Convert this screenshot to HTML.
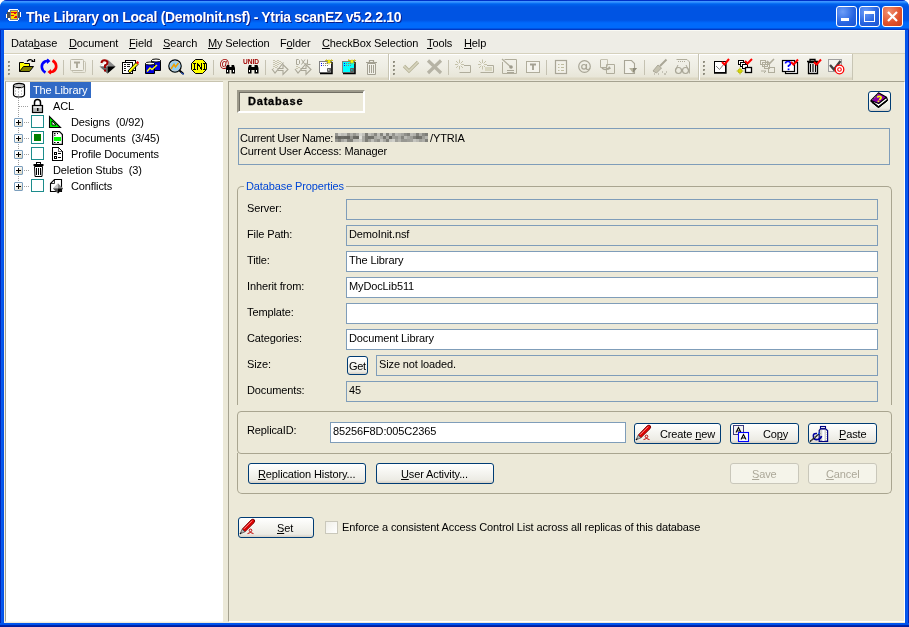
<!DOCTYPE html>
<html><head><meta charset="utf-8">
<style>
*{margin:0;padding:0;box-sizing:border-box}
html,body{width:909px;height:627px;overflow:hidden;background:#fff}
body{-webkit-font-smoothing:none;font-smooth:never}
body{position:relative;font-family:"Liberation Sans",sans-serif;font-size:11px;color:#000}
.a{position:absolute}
.t{position:absolute;white-space:nowrap;line-height:13px;font-size:11px;letter-spacing:-0.12px;will-change:transform}
.u{text-decoration:underline;text-underline-offset:1px}
svg{position:absolute;overflow:visible}
.inp{position:absolute;border:1px solid #7F9DB9;background:#fff;height:21px}
.ro{background:#ECE9D8}
.btn{position:absolute;border:1px solid #003C74;border-radius:3px;background:linear-gradient(#FFFFFF,#F6F6F2 40%,#ECEBE4 85%,#D6D0C5);}
.btnd{position:absolute;border:1px solid #C9C7BA;border-radius:3px;background:#F5F4EA;color:#ACA899}
.grp{position:absolute;border:1px solid #A9A590;border-radius:4px}
</style></head><body>
<!-- frame -->
<div class="a" style="left:0;top:0;width:909px;height:627px;background:#0046D8;border-radius:7px 7px 0 0"></div>
<div class="a" style="left:0;top:30px;width:4px;height:597px;background:linear-gradient(90deg,#0028B8 0,#0028B8 1px,#0A5CF0 1px,#0050E8)"></div>
<div class="a" style="left:905px;top:30px;width:4px;height:597px;background:linear-gradient(90deg,#0050E8,#0A5CF0 3px,#0028B8 3px)"></div>
<div class="a" style="left:0;top:623px;width:909px;height:4px;background:linear-gradient(#0058F0 0,#0050E8 50%,#0028B0 50%,#001C98)"></div>
<!-- title bar -->
<div class="a" style="left:0;top:0;width:909px;height:30px;border-radius:7px 7px 0 0;background:linear-gradient(#0031C8 0,#0031C8 1px,#3D95FF 1px,#3D95FF 2px,#157BF9 3px,#0064EE 4px,#0054E3 7px,#0054E3 20px,#0062F5 22px,#006AFB 23px,#006AFB 28px,#0040CC 29px,#0035C0 30px)"></div>
<!-- app icon -->
<svg style="left:0;top:0" width="30" height="30" viewBox="0 0 30 30" shape-rendering="crispEdges">
<path d="M9 9H18V10H19V12H21V17H19V20H18V21H9V20H8V18H6V14H7V12H8V10H9Z" fill="#fff"/>
<rect x="7" y="12" width="13" height="6" fill="#505050"/>
<rect x="10" y="10" width="8" height="10" fill="#808080"/>
<rect x="11" y="11" width="6" height="8" fill="#FFD800"/>
<path d="M11 12h3v1h-1v1h-1v1h2v1h-3v-1h1v-1h1v-1h-2z" fill="#E01010"/>
<path d="M14 12h3v1h-1v2h-1v1h2v2h-3v-1h1v-2h1v-1h-2z" fill="#E01010"/>
</svg>
<div class="t" style="left:26px;top:9px;font-weight:bold;font-size:14px;line-height:16px;letter-spacing:-0.33px;color:#fff;text-shadow:1px 1px 0 #0A1E8C">The Library on Local (DemoInit.nsf) - Ytria scanEZ v5.2.2.10</div>
<!-- window buttons -->
<div class="a" style="left:836px;top:6px;width:21px;height:21px;border:1px solid #fff;border-radius:3px;background:radial-gradient(circle at 30% 25%,#6C9DF8,#2663E0 60%,#1D55D0)"></div>
<div class="a" style="left:841px;top:18px;width:8px;height:3px;background:#fff"></div>
<div class="a" style="left:859px;top:6px;width:21px;height:21px;border:1px solid #fff;border-radius:3px;background:radial-gradient(circle at 30% 25%,#6C9DF8,#2663E0 60%,#1D55D0)"></div>
<div class="a" style="left:864px;top:11px;width:11px;height:11px;border:1px solid #fff;border-top-width:3px"></div>
<div class="a" style="left:882px;top:6px;width:21px;height:21px;border:1px solid #fff;border-radius:3px;background:radial-gradient(circle at 30% 25%,#F09070,#E0502A 60%,#C8401E)"></div>
<svg style="left:882px;top:6px" width="21" height="21" viewBox="0 0 21 21"><path d="M6 6L15 15M15 6L6 15" stroke="#fff" stroke-width="2.2"/></svg>

<!-- client -->
<div class="a" style="left:4px;top:30px;width:901px;height:593px;background:#ECE9D8"></div>
<!-- menu bar -->
<div class="a" style="left:4px;top:30px;width:901px;height:23px;background:#EEEDE6;border-top:1px solid #FAFAF4"></div>
<div class="a" style="left:4px;top:53px;width:901px;height:1px;background:#D5D1BD"></div>
<div class="t" style="left:11px;top:37px">Data<span class="u">b</span>ase</div>
<div class="t" style="left:69px;top:37px"><span class="u">D</span>ocument</div>
<div class="t" style="left:129px;top:37px"><span class="u">F</span>ield</div>
<div class="t" style="left:163px;top:37px"><span class="u">S</span>earch</div>
<div class="t" style="left:208px;top:37px"><span class="u">M</span>y Selection</div>
<div class="t" style="left:280px;top:37px">F<span class="u">o</span>lder</div>
<div class="t" style="left:322px;top:37px"><span class="u">C</span>heckBox Selection</div>
<div class="t" style="left:427px;top:37px"><span class="u">T</span>ools</div>
<div class="t" style="left:464px;top:37px"><span class="u">H</span>elp</div>

<!-- toolbar -->
<div class="a" style="left:4px;top:54px;width:901px;height:27px;background:#ECE9D8"></div><div class="a" style="left:4px;top:54px;width:384px;height:27px;background:linear-gradient(#FFFFFF 0,#FFFFFF 1px,#F4F3EC 1px,#EFEEE5 12px,#E8E6D8 23px,#DCD7C3 24px,#DCD7C3 26px,#EAE7D8 26px)"></div><div class="a" style="left:389px;top:54px;width:309px;height:27px;background:linear-gradient(#FFFFFF 0,#FFFFFF 1px,#F4F3EC 1px,#EFEEE5 12px,#E8E6D8 23px,#DCD7C3 24px,#DCD7C3 26px,#EAE7D8 26px)"></div><div class="a" style="left:699px;top:54px;width:153px;height:27px;background:linear-gradient(#FFFFFF 0,#FFFFFF 1px,#F4F3EC 1px,#EFEEE5 12px,#E8E6D8 23px,#DCD7C3 24px,#DCD7C3 26px,#EAE7D8 26px)"></div>
<svg style="left:0;top:0" width="909" height="81" viewBox="0 0 909 81" shape-rendering="crispEdges">
<!-- band backgrounds -->
<rect x="388" y="54" width="1" height="26" fill="#C8C5B4"/><rect x="389" y="54" width="1" height="26" fill="#FFFFFF"/>
<rect x="698" y="54" width="1" height="26" fill="#C8C5B4"/><rect x="699" y="54" width="1" height="26" fill="#FFFFFF"/>
<rect x="852" y="54" width="1" height="26" fill="#C8C5B4"/>
<!-- grips -->
<rect x="9" y="62" width="1" height="1" fill="#FFFFFF"/><rect x="8" y="61" width="2" height="2" fill="#8E8C7E"/><rect x="9" y="62" width="1" height="1" fill="#B0AE9E"/><rect x="9" y="66" width="1" height="1" fill="#FFFFFF"/><rect x="8" y="65" width="2" height="2" fill="#8E8C7E"/><rect x="9" y="66" width="1" height="1" fill="#B0AE9E"/><rect x="9" y="70" width="1" height="1" fill="#FFFFFF"/><rect x="8" y="69" width="2" height="2" fill="#8E8C7E"/><rect x="9" y="70" width="1" height="1" fill="#B0AE9E"/><rect x="9" y="74" width="1" height="1" fill="#FFFFFF"/><rect x="8" y="73" width="2" height="2" fill="#8E8C7E"/><rect x="9" y="74" width="1" height="1" fill="#B0AE9E"/><rect x="394" y="62" width="1" height="1" fill="#FFFFFF"/><rect x="393" y="61" width="2" height="2" fill="#8E8C7E"/><rect x="394" y="62" width="1" height="1" fill="#B0AE9E"/><rect x="394" y="66" width="1" height="1" fill="#FFFFFF"/><rect x="393" y="65" width="2" height="2" fill="#8E8C7E"/><rect x="394" y="66" width="1" height="1" fill="#B0AE9E"/><rect x="394" y="70" width="1" height="1" fill="#FFFFFF"/><rect x="393" y="69" width="2" height="2" fill="#8E8C7E"/><rect x="394" y="70" width="1" height="1" fill="#B0AE9E"/><rect x="394" y="74" width="1" height="1" fill="#FFFFFF"/><rect x="393" y="73" width="2" height="2" fill="#8E8C7E"/><rect x="394" y="74" width="1" height="1" fill="#B0AE9E"/><rect x="704" y="62" width="1" height="1" fill="#FFFFFF"/><rect x="703" y="61" width="2" height="2" fill="#8E8C7E"/><rect x="704" y="62" width="1" height="1" fill="#B0AE9E"/><rect x="704" y="66" width="1" height="1" fill="#FFFFFF"/><rect x="703" y="65" width="2" height="2" fill="#8E8C7E"/><rect x="704" y="66" width="1" height="1" fill="#B0AE9E"/><rect x="704" y="70" width="1" height="1" fill="#FFFFFF"/><rect x="703" y="69" width="2" height="2" fill="#8E8C7E"/><rect x="704" y="70" width="1" height="1" fill="#B0AE9E"/><rect x="704" y="74" width="1" height="1" fill="#FFFFFF"/><rect x="703" y="73" width="2" height="2" fill="#8E8C7E"/><rect x="704" y="74" width="1" height="1" fill="#B0AE9E"/>
<!-- separators -->
<g fill="#C5C2B2">
<rect x="63" y="60" width="1" height="15"/><rect x="92" y="60" width="1" height="15"/><rect x="213" y="60" width="1" height="15"/><rect x="265" y="60" width="1" height="15"/>
<rect x="448" y="60" width="1" height="15"/><rect x="546" y="60" width="1" height="15"/><rect x="644" y="60" width="1" height="15"/>
</g>
<g shape-rendering="geometricPrecision">
<!-- open folder -->
<path d="M19.5 71.5V62.5H23.5L24.5 63.5H29.5V66.5" fill="#FFFF00" stroke="#000"/>
<path d="M19.5 71.5L23.5 66.5H33.5L29.5 71.5Z" fill="#808000" stroke="#000"/>
<path d="M27 61.5Q30 58 33 61" fill="none" stroke="#000" stroke-width="1.2"/>
<path d="M31.5 61.5H34.5V59" fill="none" stroke="#000" stroke-width="1.2"/>
<!-- refresh -->
<path d="M49 60.5L45 61.5Q41.5 63.5 41.8 67Q42 70.5 45.5 72.5" fill="none" stroke="#0000FF" stroke-width="2.6"/>
<path d="M47 58.5L50.5 61L47 64Z" fill="#0000FF"/>
<path d="M49 72.5L53 71.5Q56.5 69.5 56.2 66Q56 62.5 52.5 60.5" fill="none" stroke="#FF0000" stroke-width="2.6"/>
<path d="M51 74.5L47.5 72L51 69Z" fill="#FF0000"/>
<!-- T disabled -->
<rect x="72.5" y="61.5" width="13" height="11" rx="1" fill="none" stroke="#C8C5B5"/>
<rect x="70.5" y="59.5" width="13" height="11" rx="1" fill="#F2F1EA" stroke="#BDBAAA"/>
<path d="M74 62.5H80M77 62.5V68" stroke="#A9A697" stroke-width="1.8"/>
<!-- ? diamond -->
<path d="M107.5 59.5L115.5 66.5L107.5 73.5L99.5 66.5Z" fill="#8A8A8A"/>
<path d="M107.5 59.5L107.5 66.5L99.5 66.5Z" fill="#FFFFFF"/>
<path d="M115.5 66.5L107.5 73.5L107.5 66.5Z" fill="#000"/>
<path d="M100 66.5L107.5 73.5L107.5 66.5" fill="#6A6A6A"/>
<path d="M101.5 63Q101.5 60.2 104.5 60.2Q107.5 60.2 107.5 62.8Q107.5 64.5 105 65.5V68" fill="none" stroke="#A00000" stroke-width="2"/>
<rect x="104" y="69.5" width="2" height="2" fill="#A00000"/>
<!-- edit -->
<rect x="125.5" y="60.5" width="10" height="10" fill="#fff" stroke="#000"/>
<rect x="122.5" y="62.5" width="10" height="11" fill="#fff" stroke="#000"/>
<path d="M124 64.5h2M127 64.5h3M124 66.5h2M127 66.5h3M124 68.5h2M124 70.5h2" stroke="#000" stroke-width=".9"/>
<path d="M128 71L136 62.5L138 64.5L129.8 73Z" fill="#FFFF00" stroke="#000" stroke-width=".9"/>
<path d="M136 62.5L137.5 61L139 62.5L138 64.5Z" fill="#FF0000"/>
<!-- db -->
<path d="M151.5 60.5V70.5H160.5V60.5" fill="#0000E0" stroke="#000"/>
<ellipse cx="156" cy="60.5" rx="4.5" ry="1.5" fill="#fff" stroke="#000"/>
<path d="M145.5 63.5V73.5H154.5V63.5" fill="#0000E0" stroke="#000"/>
<ellipse cx="150" cy="63.5" rx="4.5" ry="1.5" fill="#fff" stroke="#000"/>
<path d="M147 71.5L150 68L152 69.5L157 65" fill="none" stroke="#FFFF00" stroke-width="1.5"/>
<!-- magnifier -->
<circle cx="175" cy="66" r="6.2" fill="#8AD0F8" stroke="#000" stroke-width="1.2"/>
<circle cx="175" cy="66" r="4.8" fill="none" stroke="#C8C8C8" stroke-width="1"/>
<path d="M171 69L174 64.5L175.5 67L178.5 63" fill="none" stroke="#F0A000" stroke-width="1.5"/>
<path d="M179.5 70.5L183.5 74" stroke="#000" stroke-width="2"/>
<path d="M181 72.5L184 74.5" stroke="#2050D0" stroke-width="1"/>
<!-- INI -->
<path d="M195.5 59.5H202.5L206.5 63.5V69.5L202.5 73.5H195.5L191.5 69.5V63.5Z" fill="#FFFF00" stroke="#000"/>
<g fill="#000" shape-rendering="crispEdges"><rect x="193" y="63" width="3" height="1"/><rect x="194" y="63" width="1" height="7"/><rect x="193" y="69" width="3" height="1"/><rect x="197" y="63" width="1" height="7"/><rect x="201" y="63" width="1" height="7"/><rect x="198" y="64" width="1" height="2"/><rect x="199" y="65" width="1" height="2"/><rect x="200" y="67" width="1" height="2"/><rect x="203" y="63" width="3" height="1"/><rect x="204" y="63" width="1" height="7"/><rect x="203" y="69" width="3" height="1"/></g>
<!-- @ binoc -->
<text x="224.5" y="67" font-family="Liberation Sans" font-weight="bold" font-size="10" text-anchor="middle" fill="#A00000">@</text>
<path d="M226 73.5V68L227 65H229.5V67H231.5V65H234L235 68V73.5H231.5V70H229.5V73.5Z" fill="#000"/>
<rect x="227" y="70" width="1" height="2" fill="#fff"/><rect x="233" y="70" width="1" height="2" fill="#fff"/>
<!-- UNID binoc -->
<text x="251" y="64" font-family="Liberation Sans" font-weight="bold" font-size="6.6" text-anchor="middle" fill="#A00000" letter-spacing="0">UNID</text>
<path d="M248 73.5V68L249 65H251.5V67H254.5V65H257.5L258.5 68V73.5H254.5V70H251.5V73.5Z" fill="#000"/>
<rect x="249" y="70" width="1" height="2" fill="#fff"/><rect x="256" y="70" width="1" height="2" fill="#fff"/>
<!-- disabled sign/arrow 1 -->
<g shape-rendering="crispEdges">
<path d="M273 60h2v1h-2zM277 60h2v1h-2zM275 61h2v1h-2zM279 61h2v1h-2zM273 62h2v1h-2zM277 62h2v1h-2zM281 62h1v1h-1zM275 63h2v1h-2zM279 63h2v1h-2zM273 64h2v1h-2zM277 64h2v1h-2zM275 65h2v1h-2zM273 66h2v1h-2zM277 66h1v1h-1zM275 67h2v1h-2zM273 68h1v1h-1z" fill="#C9C6B0"/>
</g>
<g fill="none" stroke="#A9A697" stroke-width="1.1">
<path d="M272 69L275 73L283.5 62.5"/>
<path d="M277.5 68.5H283V64.5L288 69.5L283 74.5V70.5H277.5"/>
</g>
<g fill="none" stroke="#A9A697" stroke-width="1">
<path d="M296.5 59.5V64.5H298.5L299.5 63.5V60.5L298.5 59.5Z"/>
<path d="M301.5 59.5L305 64.5M305 59.5L301.5 64.5"/>
<path d="M307.5 59.5V64.5H310.5"/>
</g>
<g shape-rendering="crispEdges"><path d="M296 66h2v1h-2zM298 67h2v1h-2zM296 68h2v1h-2z" fill="#C9C6B0"/></g>
<g fill="none" stroke="#A9A697" stroke-width="1.1">
<path d="M295 69L298 73L306.5 63"/>
<path d="M300.5 68.5H306V64.5L311 69.5L306 74.5V70.5H300.5"/>
</g>
<!-- white doc star -->
<rect x="319.5" y="61.5" width="12" height="11" fill="#fff" stroke="#808080"/>
<path d="M332 62V73.5H320" fill="none" stroke="#000" stroke-width="1.5"/>
<path d="M321 63.5h1M321 65.5h1" stroke="#0000FF"/>
<path d="M323 63.5h5M323 65.5h5" stroke="#808080" stroke-dasharray="1 1"/>
<path d="M327.5 68.5h3v3h-3z" fill="#C0C0C0" stroke="#606060"/>
<path d="M328 72L331 68" stroke="#606060"/>
<path d="M325 60.5h8M329 59.5v5M327 62.5L331 62.5M326 59.5L332 63.5M332 59.5L326 63.5" stroke="#C0B000" stroke-width=".8"/>
<circle cx="329" cy="61.5" r="1.2" fill="#FFFF00"/>
<!-- cyan doc star -->
<rect x="342.5" y="61.5" width="12" height="11" fill="#00FFFF" stroke="#808080"/>
<path d="M355 62V73.5H343" fill="none" stroke="#000" stroke-width="1.5"/>
<path d="M344 63.5h1M344 65.5h1" stroke="#0000FF"/>
<path d="M346 63.5h5M346 65.5h5" stroke="#808080" stroke-dasharray="1 1"/>
<path d="M350.5 68.5h3v3h-3z" fill="#00C0C0" stroke="#606060"/>
<path d="M351 72L354 68" stroke="#606060"/>
<path d="M348 60.5h8M352 59.5v5M348 59.5L355 63.5M355 59.5L349 63.5" stroke="#C0B000" stroke-width=".8"/>
<circle cx="352" cy="61.5" r="1.2" fill="#FFFF00"/>
<!-- trash disabled -->
<path d="M366 62.5H377M369.5 62V60.5H373.5V62" fill="none" stroke="#A3A092" stroke-width="1.2"/>
<path d="M367.5 63.5H375.5V74.5H367.5Z" fill="#F1F0E8" stroke="#A3A092"/>
<path d="M369.5 65V73M371.5 65V73M373.5 65V73" stroke="#A3A092"/>
<!-- check disabled -->
<path d="M404 66L409 71L418 62" fill="none" stroke="#B5B296" stroke-width="3.2"/>
<path d="M404 66L409 71L418 62" fill="none" stroke="#D8D5BE" stroke-width="1.6"/>
<!-- X disabled -->
<path d="M428 60.5L441 73M441 60.5L428 73" stroke="#B6B3A5" stroke-width="3.2"/>
<!-- star folders disabled -->
<g stroke="#C5C2AA" stroke-width="1" fill="none">
<path d="M455 64.5h9M459.5 59.5v10M456 61L463 68M463 61L456 68"/>
<path d="M459.5 72.5H470.5V65.5H464" stroke="#B0AD9C"/>
<path d="M478 64.5h9M482.5 59.5v10M479 61L486 68M486 61L479 68"/>
<path d="M480.5 72.5H493.5V65.5H487" stroke="#B0AD9C"/>
</g>
<circle cx="459.5" cy="64.5" r="1.6" fill="#F4F3EC"/>
<circle cx="482.5" cy="64.5" r="1.6" fill="#F4F3EC"/>
<rect x="485" y="67" width="7" height="4" fill="#D8D6C0"/>
<!-- icon 3 disabled -->
<path d="M504.5 59.5H516.5V73.5H502.5V62" fill="none" stroke="#B0AD9C"/>
<path d="M502 59L512 68" stroke="#B0AD9C" stroke-width="1.2"/>
<circle cx="511" cy="67" r="1.8" fill="#9E9B8C"/>
<path d="M507 70.5h7M507 72.5h7" stroke="#A9A697"/>
<!-- T disabled 2 -->
<rect x="526.5" y="61.5" width="13" height="11" fill="#F4F3EC" stroke="#B0AD9C"/>
<path d="M530 64.5H536M533 64.5V70" stroke="#A3A092" stroke-width="1.8"/>
<!-- list disabled -->
<rect x="555.5" y="60.5" width="11" height="13" fill="#F2F1E9" stroke="#A9A697" stroke-width="1.2"/>
<path d="M558 64.5h1.5M561 64.5h3M558 67.5h1.5M561 67.5h3M558 70.5h1.5M561 70.5h3" stroke="#C0BDA0"/>
<!-- @ disabled -->
<circle cx="584.5" cy="66.5" r="5.8" fill="none" stroke="#A9A697" stroke-width="1.2"/>
<circle cx="584" cy="66.8" r="2.3" fill="none" stroke="#A9A697" stroke-width="1.2"/>
<path d="M586.5 64V69Q588 70.5 590 68" fill="none" stroke="#A9A697" stroke-width="1.1"/>
<!-- icon disabled docs arrow -->
<path d="M600.5 59.5H607.5V66.5" fill="none" stroke="#C5C2B2"/>
<path d="M600.5 60V67.5H607" fill="none" stroke="#B0AD9C"/>
<path d="M606.5 64.5H614.5V73.5H606.5Z" fill="none" stroke="#B0AD9C"/>
<path d="M602 68Q605 71 609 68" fill="none" stroke="#A9A697" stroke-width="1.6"/>
<path d="M609 66L611 68.5L608 70Z" fill="#A9A697"/>
<!-- doc arrow disabled -->
<path d="M624.5 60.5H631.5L634.5 63.5V73.5H624.5Z" fill="#F4F3EC" stroke="#A9A697" stroke-width="1.1"/>
<path d="M629 68H637L633 73Z" fill="#B8B59F"/>
<path d="M633 68H637L633 73Z" fill="#8E8B7C"/>
<!-- brush disabled -->
<path d="M660 66L666.5 59.5" stroke="#A9A697" stroke-width="2"/>
<path d="M653 71L658 65L661.5 68L656.5 73Z" fill="#C5C2B0" stroke="#A9A697"/>
<path d="M654 74h1M658 74h1M662 72h1M664 74h2M666 72h1" stroke="#9E9B8C"/>
<!-- glasses disabled -->
<path d="M676.5 59.5H687L689.5 62V73.5" fill="none" stroke="#B0AD9C"/>
<path d="M678 61.5h1M680 61.5h1M682 61.5h1M684 61.5h1" stroke="#B0AD9C"/>
<circle cx="678.5" cy="70.5" r="3" fill="none" stroke="#A9A697" stroke-width="1.2"/>
<circle cx="685.5" cy="70.5" r="3" fill="none" stroke="#A9A697" stroke-width="1.2"/>
<path d="M675.5 70L678 65M688.5 70L686 65" stroke="#A9A697"/>
<!-- checkbox check -->
<rect x="714.5" y="61.5" width="11" height="11" fill="#fff" stroke="#000"/>
<path d="M726 62V73H714" fill="none" stroke="#000" stroke-width="1.3"/>
<path d="M716 66L719.5 69.5L724 64" fill="none" stroke="#808080" stroke-width="1"/>
<path d="M722 62L724.5 64.5L729 59" fill="none" stroke="#FF0000" stroke-width="2"/>
<!-- stack check -->
<rect x="738.5" y="60.5" width="5" height="4" fill="#fff" stroke="#000"/>
<rect x="740.5" y="62.5" width="5" height="4" fill="#fff" stroke="#000"/>
<rect x="742.5" y="64.5" width="5" height="4" fill="#fff" stroke="#000"/>
<rect x="745.5" y="67.5" width="6" height="5" fill="#fff" stroke="#000" stroke-width="1.3"/>
<path d="M745 61L747.5 63.5L752 59" fill="none" stroke="#FF0000" stroke-width="2"/>
<circle cx="740" cy="71" r="2" fill="#FFFF00" stroke="#A0A000" stroke-width=".8"/>
<path d="M736.5 71h7M740 67.5v7" stroke="#C0C000" stroke-width=".8"/>
<!-- stack disabled -->
<g fill="none" stroke="#B0AD9C">
<rect x="760.5" y="60.5" width="5" height="4"/><rect x="762.5" y="62.5" width="5" height="4"/><rect x="764.5" y="64.5" width="5" height="4"/><rect x="768.5" y="67.5" width="6" height="5"/>
<path d="M767 61L769.5 63.5L774 59" stroke-width="1.6"/>
<path d="M761 71H766L764 73" />
</g>
<!-- ? check -->
<rect x="785.5" y="62.5" width="12" height="11" fill="#fff" stroke="#000" stroke-width="1.2"/>
<rect x="782.5" y="60.5" width="12" height="11" fill="#fff" stroke="#000" stroke-width="1.2"/>
<path d="M785.5 63.5Q785.5 61.5 788 61.5Q790.5 61.5 790.5 63.5Q790.5 65 788.5 65.8V67" fill="none" stroke="#0000FF" stroke-width="1.6"/>
<rect x="787.7" y="68.5" width="1.7" height="1.7" fill="#0000FF"/>
<path d="M791 62L793.5 64.5L798 59.5" fill="none" stroke="#FF0000" stroke-width="2"/>
<!-- trash check -->
<path d="M807 61.5H818M810 61V59.5H815V61" fill="none" stroke="#000" stroke-width="1.3"/>
<path d="M808.5 62.5H817.5V73.5H808.5Z" fill="#fff" stroke="#000" stroke-width="1.3"/>
<path d="M810.5 64V72M813 64V72M815.5 64V72" stroke="#000" stroke-width="1.2"/>
<path d="M814 62L816.5 64.5L821 59.5" fill="none" stroke="#FF0000" stroke-width="2"/>
<!-- target check -->
<rect x="828.5" y="59.5" width="13" height="12" fill="#F4F3EE" stroke="#A0A0A0"/>
<path d="M830 65L834 69.5L840.5 61" fill="none" stroke="#404040" stroke-width="2.4"/>
<circle cx="839.5" cy="69.5" r="4.3" fill="#fff" stroke="#FF0000" stroke-width="1.3"/>
<circle cx="839.5" cy="69.5" r="1.8" fill="#fff" stroke="#FF0000" stroke-width="1.1"/>
</g>
</svg>


<!-- tree pane -->
<div class="a" style="left:5px;top:81px;width:218px;height:541px;background:#fff;border-left:1px solid #A5A290;border-top:1px solid #C8C4B0;border-bottom:1px solid #FAF9F2"></div><div class="a" style="left:4px;top:81px;width:1px;height:541px;background:#F4F2E6"></div>

<!-- tree -->
<div class="a" style="left:30px;top:82px;width:61px;height:16px;background:#316AC5"></div>
<div class="t" style="left:33px;top:84px;color:#fff">The Library</div>
<svg style="left:12px;top:82px" width="14" height="16" viewBox="0 0 14 16">
<path d="M1.5 3.5v9c0 1.4 2.5 2.5 5.5 2.5s5.5-1.1 5.5-2.5v-9" fill="#fff" stroke="#000" stroke-width="1.2"/>
<ellipse cx="7" cy="3.5" rx="5.5" ry="2.2" fill="#C8C8C8" stroke="#000" stroke-width="1.2"/>
<path d="M3 6h1M6 7h1M9 6h1M3 9h1M6 10h1M9 9h1M3 12h1M6 13h1M9 12h1" stroke="#999" stroke-width="1"/>
</svg>
<!-- dotted lines -->
<div class="a" style="left:18px;top:98px;width:1px;height:88px;background:repeating-linear-gradient(#A0A0A0 0 1px,transparent 1px 2px)"></div>
<div class="a" style="left:19px;top:106px;width:10px;height:1px;background:repeating-linear-gradient(90deg,#A0A0A0 0 1px,transparent 1px 2px)"></div>
<!-- ACL -->
<svg style="left:31px;top:98px" width="13" height="16" viewBox="0 0 13 16">
<path d="M3.5 7V4.5a3 3 0 0 1 6 0V7" fill="none" stroke="#000" stroke-width="1.5"/>
<rect x="1.5" y="7.5" width="10" height="7" fill="#B8B8B8" stroke="#000" stroke-width="1.2"/>
<rect x="2.5" y="8.5" width="8" height="1.2" fill="#fff"/>
<rect x="6" y="10" width="1.5" height="3" fill="#000"/>
</svg>
<div class="t" style="left:53px;top:100px">ACL</div>
<div class="a" style="left:14px;top:118px;width:9px;height:9px;border:1px solid #7B9EBD;border-radius:1px;background:linear-gradient(135deg,#fff 30%,#D8D2BC)"></div><div class="a" style="left:16px;top:122px;width:5px;height:1px;background:#000"></div><div class="a" style="left:18px;top:120px;width:1px;height:5px;background:#000"></div><div class="a" style="left:24px;top:122px;width:6px;height:1px;background:repeating-linear-gradient(90deg,#A0A0A0 0 1px,transparent 1px 2px)"></div><div class="a" style="left:31px;top:115px;width:13px;height:13px;border:1px solid #1C8C8C;background:#fff"></div><svg style="left:49px;top:116px" width="13" height="13" viewBox="0 0 13 13"><path d="M0.5 0.5V11.5H11.5Z" fill="#00F000" stroke="#000" stroke-width="1.1" stroke-linejoin="miter"/><path d="M3 5V9H7Z" fill="#fff" stroke="#000" stroke-width="0.9"/></svg><div class="t" style="left:71px;top:116px">Designs&nbsp; (0/92)</div><div class="a" style="left:14px;top:134px;width:9px;height:9px;border:1px solid #7B9EBD;border-radius:1px;background:linear-gradient(135deg,#fff 30%,#D8D2BC)"></div><div class="a" style="left:16px;top:138px;width:5px;height:1px;background:#000"></div><div class="a" style="left:18px;top:136px;width:1px;height:5px;background:#000"></div><div class="a" style="left:24px;top:138px;width:6px;height:1px;background:repeating-linear-gradient(90deg,#A0A0A0 0 1px,transparent 1px 2px)"></div><div class="a" style="left:31px;top:131px;width:13px;height:13px;border:1px solid #1C8C8C;background:#fff"></div><div class="a" style="left:34px;top:134px;width:7px;height:7px;background:#008000"></div><svg style="left:52px;top:131px" width="11" height="14" viewBox="0 0 11 14"><path d="M0.6 0.6H7.5L10.4 3.5V13.4H0.6Z" fill="#fff" stroke="#000" stroke-width="1.2"/><rect x="2" y="6" width="7" height="4" fill="#00FF00"/><path d="M2 2.5h1.5M5 2.5h1M2 4.2h1.5M2 11.5h1.5M5 11.5h2" stroke="#000" stroke-width="1"/></svg><div class="t" style="left:71px;top:132px">Documents&nbsp; (3/45)</div><div class="a" style="left:14px;top:150px;width:9px;height:9px;border:1px solid #7B9EBD;border-radius:1px;background:linear-gradient(135deg,#fff 30%,#D8D2BC)"></div><div class="a" style="left:16px;top:154px;width:5px;height:1px;background:#000"></div><div class="a" style="left:18px;top:152px;width:1px;height:5px;background:#000"></div><div class="a" style="left:24px;top:154px;width:6px;height:1px;background:repeating-linear-gradient(90deg,#A0A0A0 0 1px,transparent 1px 2px)"></div><div class="a" style="left:31px;top:147px;width:13px;height:13px;border:1px solid #1C8C8C;background:#fff"></div><svg style="left:52px;top:147px" width="12" height="15" viewBox="0 0 12 15" shape-rendering="crispEdges"><path d="M0.5 0.5H6.5L10.5 4.5V13.5H0.5Z" fill="#fff" stroke="#000" stroke-width="1"/><path d="M6.5 0.5V4.5H10.5" fill="none" stroke="#000" stroke-width=".6"/><rect x="2.5" y="5.5" width="2" height="2" fill="#fff" stroke="#000"/><rect x="2.5" y="9.5" width="2" height="2" fill="#fff" stroke="#000"/><path d="M5.5 6.5H9M5.5 10.5H9" stroke="#000"/></svg><div class="t" style="left:71px;top:148px">Profile Documents</div><div class="a" style="left:14px;top:166px;width:9px;height:9px;border:1px solid #7B9EBD;border-radius:1px;background:linear-gradient(135deg,#fff 30%,#D8D2BC)"></div><div class="a" style="left:16px;top:170px;width:5px;height:1px;background:#000"></div><div class="a" style="left:18px;top:168px;width:1px;height:5px;background:#000"></div><div class="a" style="left:24px;top:170px;width:6px;height:1px;background:repeating-linear-gradient(90deg,#A0A0A0 0 1px,transparent 1px 2px)"></div><svg style="left:33px;top:162px" width="11" height="15" viewBox="0 0 11 15"><rect x="0.5" y="2" width="10" height="2" fill="#000"/><rect x="3.5" y="0.5" width="4" height="2" fill="none" stroke="#000"/><path d="M1.5 4.5H9.5L9 14.5H2Z" fill="#fff" stroke="#000"/><path d="M3.5 6V13M5.5 6V13M7.5 6V13" stroke="#000"/></svg><div class="t" style="left:53px;top:164px">Deletion Stubs&nbsp; (3)</div><div class="a" style="left:14px;top:182px;width:9px;height:9px;border:1px solid #7B9EBD;border-radius:1px;background:linear-gradient(135deg,#fff 30%,#D8D2BC)"></div><div class="a" style="left:16px;top:186px;width:5px;height:1px;background:#000"></div><div class="a" style="left:18px;top:184px;width:1px;height:5px;background:#000"></div><div class="a" style="left:24px;top:186px;width:6px;height:1px;background:repeating-linear-gradient(90deg,#A0A0A0 0 1px,transparent 1px 2px)"></div><div class="a" style="left:31px;top:179px;width:13px;height:13px;border:1px solid #1C8C8C;background:#fff"></div><svg style="left:49px;top:178px" width="16" height="17" viewBox="0 0 16 17"><path d="M5.5 1.5H12.5V13.5H1.5V5.5Z" fill="#fff" stroke="#000" stroke-width="1.1"/><path d="M1.5 5.5H5.5V1.5" fill="none" stroke="#000" stroke-width=".8"/><path d="M9 5.5L14 10.5L9 15.5L4 10.5Z" fill="#9A9A9A"/><path d="M9 5.5L9 10.5L4 10.5Z" fill="#C8C8C8"/><path d="M9 5.5L14 10.5H9Z" fill="#8A8A8A"/><path d="M4 10.5H9V15.5Z" fill="#505050"/><path d="M14 10.5H9V15.5Z" fill="#000"/></svg><div class="t" style="left:71px;top:180px">Conflicts</div>


<!-- right pane -->
<div class="a" style="left:228px;top:81px;width:677px;height:541px;border-left:1px solid #A5A290;border-top:1px solid #A5A290;border-right:1px solid #FFFFFF;border-bottom:1px solid #FFFFFF"></div>

<!-- right pane content -->
<div class="a" style="left:237px;top:90px;width:128px;height:23px;border-top:2px solid #9D9A8B;border-left:2px solid #9D9A8B;border-bottom:2px solid #fff;border-right:2px solid #fff"></div>
<div class="a" style="left:239px;top:92px;width:124px;height:1px;background:#716F64"></div>
<div class="a" style="left:239px;top:92px;width:1px;height:19px;background:#716F64"></div>
<div class="t" style="left:248px;top:95px;font-weight:bold;letter-spacing:0.8px;-webkit-text-stroke:0.3px #000">Database</div>
<!-- help book button -->
<div class="btn" style="left:868px;top:91px;width:23px;height:21px"></div>
<svg style="left:864px;top:88px" width="30" height="28" viewBox="864 88 30 28">
<path d="M871 101L878.5 107L887.5 100L886.5 97.5Z" fill="#fff" stroke="#000" stroke-width="1.2" stroke-linejoin="round"/>
<path d="M871 101L878.5 107L887.5 100" fill="none" stroke="#000" stroke-width="1.4"/>
<path d="M872 102.5L878.5 107.5L887 101" fill="none" stroke="#000" stroke-width="1"/>
<path d="M878.5 92.8L886.5 97.3L878.7 103.5L871 100.5Z" fill="#8A00A8" stroke="#000" stroke-width="1.1" stroke-linejoin="round"/>
<path d="M872.5 99.5L878.5 94" stroke="#C8A8D8" stroke-width=".9" stroke-dasharray="1 1"/>
<path d="M877.2 97.4Q878.5 95.8 880.6 96.6Q882 97.6 880.2 99L879.2 99.8" fill="none" stroke="#FFFF00" stroke-width="1.6"/>
<rect x="877.6" y="100.6" width="1.6" height="1.4" fill="#FFFF00"/>
</svg>
<!-- user box -->
<div class="a" style="left:238px;top:128px;width:652px;height:37px;border:1px solid #7F9DB9"></div>
<div class="t" style="left:240px;top:132px;letter-spacing:-0.3px">Current User Name:</div>
<svg style="left:335px;top:133px" width="93" height="9" shape-rendering="crispEdges"><rect x="0" y="0" width="3" height="3" fill="rgb(150,150,144)"/><rect x="0" y="3" width="3" height="3" fill="rgb(114,114,108)"/><rect x="0" y="6" width="3" height="3" fill="rgb(150,150,144)"/><rect x="3" y="0" width="3" height="3" fill="rgb(203,203,197)"/><rect x="3" y="3" width="3" height="3" fill="rgb(101,101,95)"/><rect x="3" y="6" width="3" height="3" fill="rgb(129,129,123)"/><rect x="6" y="0" width="3" height="3" fill="rgb(188,188,182)"/><rect x="6" y="3" width="3" height="3" fill="rgb(107,107,101)"/><rect x="6" y="6" width="3" height="3" fill="rgb(166,166,160)"/><rect x="9" y="0" width="3" height="3" fill="rgb(194,194,188)"/><rect x="9" y="3" width="3" height="3" fill="rgb(102,102,96)"/><rect x="9" y="6" width="3" height="3" fill="rgb(184,184,178)"/><rect x="12" y="0" width="3" height="3" fill="rgb(147,147,141)"/><rect x="12" y="3" width="3" height="3" fill="rgb(99,99,93)"/><rect x="12" y="6" width="3" height="3" fill="rgb(131,131,125)"/><rect x="15" y="0" width="3" height="3" fill="rgb(175,175,169)"/><rect x="15" y="3" width="3" height="3" fill="rgb(148,148,142)"/><rect x="15" y="6" width="3" height="3" fill="rgb(128,128,122)"/><rect x="18" y="0" width="3" height="3" fill="rgb(150,150,144)"/><rect x="18" y="3" width="3" height="3" fill="rgb(106,106,100)"/><rect x="18" y="6" width="3" height="3" fill="rgb(190,190,184)"/><rect x="21" y="0" width="3" height="3" fill="rgb(174,174,168)"/><rect x="21" y="3" width="3" height="3" fill="rgb(102,102,96)"/><rect x="21" y="6" width="3" height="3" fill="rgb(192,192,186)"/><rect x="24" y="0" width="3" height="3" fill="rgb(212,212,206)"/><rect x="24" y="3" width="3" height="3" fill="rgb(225,225,219)"/><rect x="24" y="6" width="3" height="3" fill="rgb(206,206,200)"/><rect x="27" y="0" width="3" height="3" fill="rgb(193,193,187)"/><rect x="27" y="3" width="3" height="3" fill="rgb(169,169,163)"/><rect x="27" y="6" width="3" height="3" fill="rgb(170,170,164)"/><rect x="30" y="0" width="3" height="3" fill="rgb(126,126,120)"/><rect x="30" y="3" width="3" height="3" fill="rgb(123,123,117)"/><rect x="30" y="6" width="3" height="3" fill="rgb(125,125,119)"/><rect x="33" y="0" width="3" height="3" fill="rgb(191,191,185)"/><rect x="33" y="3" width="3" height="3" fill="rgb(112,112,106)"/><rect x="33" y="6" width="3" height="3" fill="rgb(157,157,151)"/><rect x="36" y="0" width="3" height="3" fill="rgb(173,173,167)"/><rect x="36" y="3" width="3" height="3" fill="rgb(113,113,107)"/><rect x="36" y="6" width="3" height="3" fill="rgb(189,189,183)"/><rect x="39" y="0" width="3" height="3" fill="rgb(135,135,129)"/><rect x="39" y="3" width="3" height="3" fill="rgb(168,168,162)"/><rect x="39" y="6" width="3" height="3" fill="rgb(159,159,153)"/><rect x="42" y="0" width="3" height="3" fill="rgb(191,191,185)"/><rect x="42" y="3" width="3" height="3" fill="rgb(182,182,176)"/><rect x="42" y="6" width="3" height="3" fill="rgb(143,143,137)"/><rect x="45" y="0" width="3" height="3" fill="rgb(133,133,127)"/><rect x="45" y="3" width="3" height="3" fill="rgb(169,169,163)"/><rect x="45" y="6" width="3" height="3" fill="rgb(193,193,187)"/><rect x="48" y="0" width="3" height="3" fill="rgb(201,201,195)"/><rect x="48" y="3" width="3" height="3" fill="rgb(119,119,113)"/><rect x="48" y="6" width="3" height="3" fill="rgb(167,167,161)"/><rect x="51" y="0" width="3" height="3" fill="rgb(132,132,126)"/><rect x="51" y="3" width="3" height="3" fill="rgb(165,165,159)"/><rect x="51" y="6" width="3" height="3" fill="rgb(128,128,122)"/><rect x="54" y="0" width="3" height="3" fill="rgb(192,192,186)"/><rect x="54" y="3" width="3" height="3" fill="rgb(102,102,96)"/><rect x="54" y="6" width="3" height="3" fill="rgb(199,199,193)"/><rect x="57" y="0" width="3" height="3" fill="rgb(146,146,140)"/><rect x="57" y="3" width="3" height="3" fill="rgb(158,158,152)"/><rect x="57" y="6" width="3" height="3" fill="rgb(207,207,201)"/><rect x="60" y="0" width="3" height="3" fill="rgb(188,188,182)"/><rect x="60" y="3" width="3" height="3" fill="rgb(149,149,143)"/><rect x="60" y="6" width="3" height="3" fill="rgb(160,160,154)"/><rect x="63" y="0" width="3" height="3" fill="rgb(179,179,173)"/><rect x="63" y="3" width="3" height="3" fill="rgb(169,169,163)"/><rect x="63" y="6" width="3" height="3" fill="rgb(178,178,172)"/><rect x="66" y="0" width="3" height="3" fill="rgb(166,166,160)"/><rect x="66" y="3" width="3" height="3" fill="rgb(133,133,127)"/><rect x="66" y="6" width="3" height="3" fill="rgb(151,151,145)"/><rect x="69" y="0" width="3" height="3" fill="rgb(143,143,137)"/><rect x="69" y="3" width="3" height="3" fill="rgb(184,184,178)"/><rect x="69" y="6" width="3" height="3" fill="rgb(151,151,145)"/><rect x="72" y="0" width="3" height="3" fill="rgb(130,130,124)"/><rect x="72" y="3" width="3" height="3" fill="rgb(168,168,162)"/><rect x="72" y="6" width="3" height="3" fill="rgb(158,158,152)"/><rect x="75" y="0" width="3" height="3" fill="rgb(187,187,181)"/><rect x="75" y="3" width="3" height="3" fill="rgb(158,158,152)"/><rect x="75" y="6" width="3" height="3" fill="rgb(163,163,157)"/><rect x="78" y="0" width="3" height="3" fill="rgb(177,177,171)"/><rect x="78" y="3" width="3" height="3" fill="rgb(131,131,125)"/><rect x="78" y="6" width="3" height="3" fill="rgb(197,197,191)"/><rect x="81" y="0" width="3" height="3" fill="rgb(129,129,123)"/><rect x="81" y="3" width="3" height="3" fill="rgb(110,110,104)"/><rect x="81" y="6" width="3" height="3" fill="rgb(185,185,179)"/><rect x="84" y="0" width="3" height="3" fill="rgb(173,173,167)"/><rect x="84" y="3" width="3" height="3" fill="rgb(116,116,110)"/><rect x="84" y="6" width="3" height="3" fill="rgb(163,163,157)"/><rect x="87" y="0" width="3" height="3" fill="rgb(139,139,133)"/><rect x="87" y="3" width="3" height="3" fill="rgb(157,157,151)"/><rect x="87" y="6" width="3" height="3" fill="rgb(173,173,167)"/><rect x="90" y="0" width="3" height="3" fill="rgb(125,125,119)"/><rect x="90" y="3" width="3" height="3" fill="rgb(180,180,174)"/><rect x="90" y="6" width="3" height="3" fill="rgb(129,129,123)"/></svg>
<div class="t" style="left:430px;top:132px">/YTRIA</div>
<div class="t" style="left:240px;top:145px">Current User Access: Manager</div>
<!-- Database Properties group -->
<div class="a" style="left:237px;top:186px;width:655px;height:219px;border:1px solid #A9A590;border-radius:5px 5px 0 0;border-bottom:none"></div>
<div class="t" style="left:244px;top:180px;color:#0046D5;background:#ECE9D8;padding:0 2px">Database Properties</div>
<div class="t" style="left:247px;top:202px">Server:</div>
<div class="inp ro" style="left:346px;top:199px;width:532px"></div>
<div class="t" style="left:247px;top:228px">File Path:</div>
<div class="inp ro" style="left:346px;top:225px;width:532px"></div><div class="t" style="left:349px;top:228px">DemoInit.nsf</div>
<div class="t" style="left:247px;top:254px">Title:</div>
<div class="inp" style="left:346px;top:251px;width:532px"></div><div class="t" style="left:349px;top:254px">The Library</div>
<div class="t" style="left:247px;top:280px">Inherit from:</div>
<div class="inp" style="left:346px;top:277px;width:532px"></div><div class="t" style="left:349px;top:280px">MyDocLib511</div>
<div class="t" style="left:247px;top:306px">Template:</div>
<div class="inp" style="left:346px;top:303px;width:532px"></div>
<div class="t" style="left:247px;top:332px">Categories:</div>
<div class="inp" style="left:346px;top:329px;width:532px"></div><div class="t" style="left:349px;top:332px">Document Library</div>
<div class="t" style="left:247px;top:358px">Size:</div>
<div class="btn" style="left:347px;top:356px;width:21px;height:19px"></div><div class="t" style="left:349px;top:360px;letter-spacing:-0.3px">Get</div>
<div class="inp ro" style="left:376px;top:355px;width:502px"></div><div class="t" style="left:379px;top:358px">Size not loaded.</div>
<div class="t" style="left:247px;top:384px">Documents:</div>
<div class="inp ro" style="left:346px;top:381px;width:532px"></div><div class="t" style="left:349px;top:384px">45</div>

<!-- ReplicaID group -->
<div class="grp" style="left:237px;top:411px;width:655px;height:43px"></div>
<div class="t" style="left:247px;top:424px">ReplicaID:</div>
<div class="inp" style="left:330px;top:422px;width:296px"></div>
<div class="t" style="left:333px;top:425px">85256F8D:005C2365</div>
<div class="btn" style="left:634px;top:423px;width:87px;height:21px"></div>
<svg style="left:635px;top:424px" width="17" height="17" viewBox="0 0 17 17">
<path d="M3.2 11.2L12.5 1.6Q14.2 0.6 15.3 1.8Q16.2 3 15.1 4.6L5.8 13.8Z" fill="#E00000" stroke="#7A0000" stroke-width="1"/>
<path d="M5 10.8L13.2 2.6" stroke="#FF9090" stroke-width="1"/>
<path d="M3.2 11.2L5.8 13.8L1 16Z" fill="#B8B8B8" stroke="#505050" stroke-width=".8"/>
<path d="M1 16L2.2 14.5" stroke="#000" stroke-width="1"/>
<circle cx="11.5" cy="12.4" r="1.3" fill="none" stroke="#C00000" stroke-width="1"/>
<path d="M8.5 15.6Q11.5 13.4 14.5 15.6" fill="none" stroke="#C00000" stroke-width="1"/>
</svg>
<div class="t" style="left:660px;top:428px">Create <span class="u">n</span>ew</div>
<div class="btn" style="left:730px;top:423px;width:69px;height:21px"></div>
<svg style="left:732px;top:424px" width="18" height="19" viewBox="732 424 18 19">
<rect x="733.5" y="425.5" width="10" height="9" fill="#F4F4F4" stroke="#0000FF" stroke-dasharray="1 1"/>
<rect x="733.5" y="425.5" width="10" height="9" fill="none" stroke="#000" stroke-dasharray="1 1" stroke-dashoffset="1"/>
<path d="M736 432.5L738.5 427.5L741 432.5M737 431h3" fill="none" stroke="#000" stroke-width="1.1"/>
<rect x="738.5" y="432.5" width="10" height="9" fill="#fff" stroke="#0000FF" stroke-width="1.1"/>
<path d="M741 439.5L743.5 434.5L746 439.5M742 438h3" fill="none" stroke="#000" stroke-width="1.1"/>
</svg>
<div class="t" style="left:763px;top:428px">Co<span class="u">p</span>y</div>
<div class="btn" style="left:808px;top:423px;width:69px;height:21px"></div>
<svg style="left:808px;top:424px" width="22" height="19" viewBox="808 424 22 19">
<rect x="820.5" y="426.5" width="5" height="2" fill="#fff" stroke="#000080" stroke-width="1.1"/>
<path d="M819.2 441.3V430.5L820.5 428.8H825.5L827.6 430.5V441.3Z" fill="#D0D0D0" stroke="#000080" stroke-width="1.2"/>
<rect x="822.3" y="430" width="2.2" height="11" fill="#fff"/>
<path d="M826.5 431v9" stroke="#fff" stroke-dasharray="1 1"/>
<path d="M817 433.5Q812.5 433 813.5 437Q814 440 817.5 439.5Q821 439 821.5 436" fill="none" stroke="#0000A0" stroke-width="1.6"/>
<path d="M810 441.5L820 433" stroke="#000" stroke-width="1.4"/>
<path d="M811 440.5L818.5 434" stroke="#fff" stroke-width=".6" stroke-dasharray="1 1"/>
<circle cx="819" cy="433.5" r="1" fill="#2060FF"/>
</svg>
<div class="t" style="left:839px;top:428px"><span class="u">P</span>aste</div>
<!-- buttons group -->
<div class="a" style="left:237px;top:453px;width:655px;height:41px;border:1px solid #A9A590;border-top:none;border-radius:0 0 5px 5px"></div>
<div class="btn" style="left:248px;top:463px;width:118px;height:21px"></div>
<div class="t" style="left:258px;top:468px"><span class="u">R</span>eplication History...</div>
<div class="btn" style="left:376px;top:463px;width:118px;height:21px"></div>
<div class="t" style="left:401px;top:468px"><span class="u">U</span>ser Activity...</div>
<div class="btnd" style="left:730px;top:463px;width:69px;height:21px"></div>
<div class="t" style="left:752px;top:468px;color:#ACA899"><span class="u">S</span>ave</div>
<div class="btnd" style="left:808px;top:463px;width:69px;height:21px"></div>
<div class="t" style="left:826px;top:468px;color:#ACA899"><span class="u">C</span>ancel</div>
<!-- Set -->
<div class="btn" style="left:238px;top:517px;width:76px;height:21px"></div>
<svg style="left:239px;top:518px" width="17" height="17" viewBox="0 0 17 17">
<path d="M3.2 11.2L12.5 1.6Q14.2 0.6 15.3 1.8Q16.2 3 15.1 4.6L5.8 13.8Z" fill="#E00000" stroke="#7A0000" stroke-width="1"/>
<path d="M5 10.8L13.2 2.6" stroke="#FF9090" stroke-width="1"/>
<path d="M3.2 11.2L5.8 13.8L1 16Z" fill="#B8B8B8" stroke="#505050" stroke-width=".8"/>
<path d="M1 16L2.2 14.5" stroke="#000" stroke-width="1"/>
<circle cx="11.5" cy="12.4" r="1.3" fill="none" stroke="#C00000" stroke-width="1"/>
<path d="M8.5 15.6Q11.5 13.4 14.5 15.6" fill="none" stroke="#C00000" stroke-width="1"/>
</svg>
<div class="t" style="left:277px;top:522px"><span class="u">S</span>et</div>
<div class="a" style="left:325px;top:521px;width:13px;height:13px;border:1px solid #CAC8BB;background:linear-gradient(135deg,#F0EFE8,#fff)"></div>
<div class="t" style="left:342px;top:521px">Enforce a consistent Access Control List across all replicas of this database</div>

</body></html>
